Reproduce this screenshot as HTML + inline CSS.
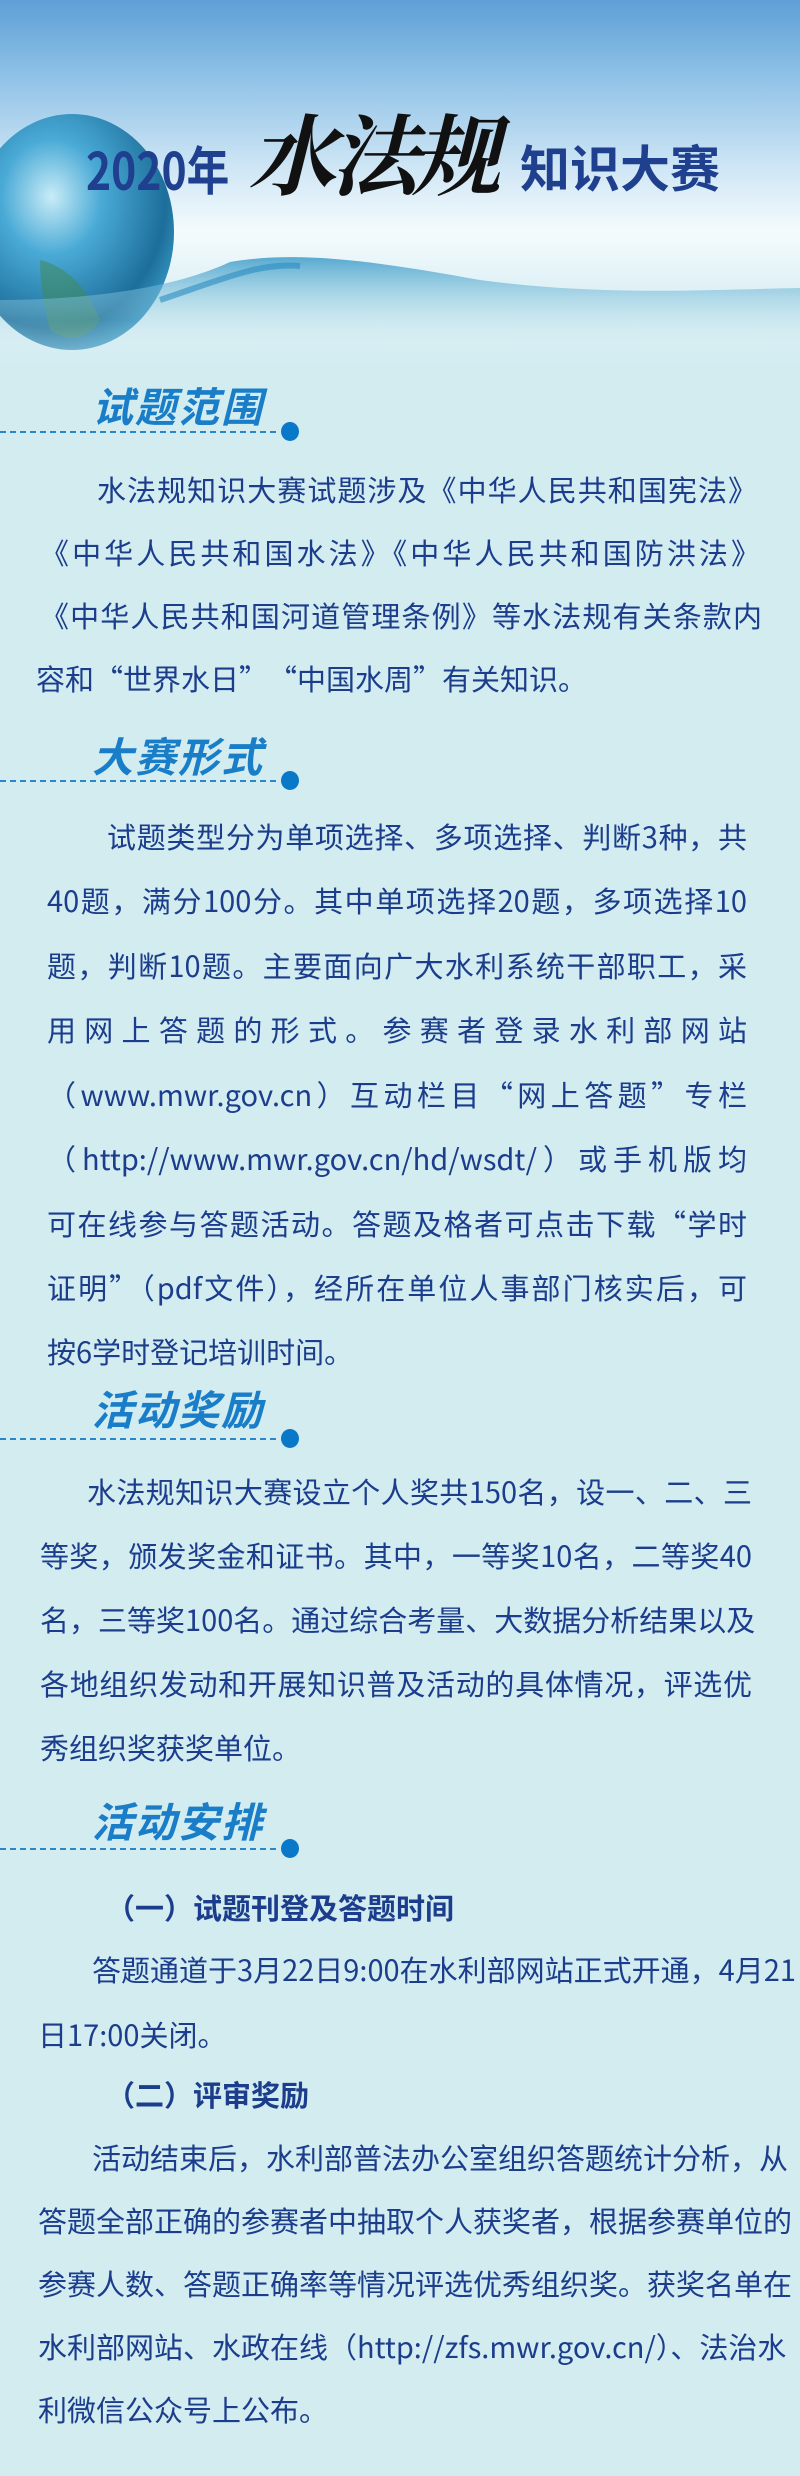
<!DOCTYPE html>
<html><head><meta charset="utf-8"><style>
*{margin:0;padding:0;box-sizing:border-box}
body{width:800px;height:2476px;background:#d2ecf0;position:relative;overflow:hidden;font-family:"Noto Sans CJK SC","Liberation Sans",sans-serif;color:#1b3d8c}
.banner{position:absolute;left:0;top:0;width:800px;height:400px;background:linear-gradient(180deg,#5e9fd6 0%,#8cc0e6 18%,#cfe6f5 42%,#f4fbfd 58%,#dff1f6 72%,#d2ecf0 100%)}
.t{position:absolute;white-space:nowrap}
.ln{position:absolute;font-size:29px;line-height:40px;white-space:nowrap;text-align:justify;text-align-last:justify}
.ll{position:absolute;font-size:29px;line-height:40px;white-space:nowrap}
.h{position:absolute;left:92px;font-size:41px;font-weight:bold;font-style:italic;color:#1a7dc8;letter-spacing:2px;font-family:"WenQuanYi Zen Hei","Noto Sans CJK SC",sans-serif}
.dash{position:absolute;left:0;width:276px;border-top:2px dashed #2a86cc}
.dot{position:absolute;left:281px;width:18px;height:19px;border-radius:50%;background:#0a78c8}
.sub{position:absolute;left:106px;font-size:29px;font-weight:bold;line-height:40px}
</style></head><body>
<div class="banner"></div>
<svg style="position:absolute;left:0;top:0" width="800" height="400">
<defs><radialGradient id="g" cx="0.4" cy="0.35" r="0.7"><stop offset="0" stop-color="#c8ecf7"/><stop offset="0.35" stop-color="#4aaad6"/><stop offset="0.8" stop-color="#1d6e9a"/><stop offset="1" stop-color="#3a9ac6"/></radialGradient>
<linearGradient id="w" x1="0" y1="0" x2="0" y2="1"><stop offset="0" stop-color="#3d9cc9" stop-opacity="0.85"/><stop offset="1" stop-color="#d2ecf0" stop-opacity="0"/></linearGradient>
<linearGradient id="f" x1="0" y1="0" x2="0" y2="1"><stop offset="0" stop-color="#d2ecf0" stop-opacity="0"/><stop offset="1" stop-color="#d2ecf0"/></linearGradient></defs>
<ellipse cx="72" cy="232" rx="102" ry="118" fill="url(#g)"/>
<path d="M40 260 q40 10 60 60 q-20 30 -50 10 q-10 -40 -10 -70 z" fill="#3f8a5a" opacity="0.55"/>
<path d="M0 300 C80 300 170 290 230 262 C300 250 380 262 480 280 C600 296 700 290 800 288 L800 350 C650 340 500 350 350 345 C200 345 100 355 0 350 Z" fill="url(#w)"/>
<path d="M160 300 C220 280 260 262 300 266" stroke="#2a8cc0" stroke-width="6" fill="none" opacity="0.6"/>
<rect x="0" y="320" width="800" height="80" fill="url(#f)"/>
</svg>
<div class="t" style="left:86px;top:130px;font-size:52px;font-weight:bold;color:#1f3f8f;transform:scaleX(0.82);transform-origin:left;font-family:'Noto Sans CJK SC',sans-serif">2020年</div>
<div class="t" style="left:248px;top:88px;font-size:88px;font-weight:bold;font-style:italic;color:#111;font-family:'Noto Serif CJK SC',serif;letter-spacing:-6px">水法规</div>
<div class="t" style="left:520px;top:130px;font-size:50px;font-weight:bold;color:#1f3f8f;font-family:'Noto Sans CJK SC',sans-serif">知识大赛</div>

<div class="h" style="top:374px">试题范围</div><div class="dash" style="top:431px"></div><div class="dot" style="top:422px"></div>
<div class="ln" style="left:97px;width:660px;top:469px">水法规知识大赛试题涉及《中华人民共和国宪法》</div>
<div class="ln" style="left:40px;width:720px;top:532px">《中华人民共和国水法》《中华人民共和国防洪法》</div>
<div class="ln" style="left:40px;width:722px;top:595px">《中华人民共和国河道管理条例》等水法规有关条款内</div>
<div class="ll" style="left:36px;top:658px">容和“世界水日”　“中国水周”有关知识。</div>

<div class="h" style="top:724px">大赛形式</div><div class="dash" style="top:780px"></div><div class="dot" style="top:771px"></div>
<div class="ln" style="left:107px;width:640px;top:816px">试题类型分为单项选择、多项选择、判断3种，共</div>
<div class="ln" style="left:47px;width:700px;top:880px">40题，满分100分。其中单项选择20题，多项选择10</div>
<div class="ln" style="left:47px;width:700px;top:945px">题，判断10题。主要面向广大水利系统干部职工，采</div>
<div class="ln" style="left:47px;width:700px;top:1009px">用网上答题的形式。参赛者登录水利部网站</div>
<div class="ln" style="left:47px;width:700px;top:1074px">（www.mwr.gov.cn）互动栏目“网上答题”专栏</div>
<div class="ln" style="left:47px;width:700px;top:1138px">（http://www.mwr.gov.cn/hd/wsdt/）或手机版均</div>
<div class="ln" style="left:47px;width:700px;top:1203px">可在线参与答题活动。答题及格者可点击下载“学时</div>
<div class="ln" style="left:47px;width:700px;top:1267px">证明”（pdf文件），经所在单位人事部门核实后，可</div>
<div class="ll" style="left:47px;top:1331px">按6学时登记培训时间。</div>

<div class="h" style="top:1377px">活动奖励</div><div class="dash" style="top:1438px"></div><div class="dot" style="top:1429px"></div>
<div class="ln" style="left:87px;width:665px;top:1471px">水法规知识大赛设立个人奖共150名，设一、二、三</div>
<div class="ln" style="left:40px;width:712px;top:1535px">等奖，颁发奖金和证书。其中，一等奖10名，二等奖40</div>
<div class="ln" style="left:40px;width:712px;top:1599px">名，三等奖100名。通过综合考量、大数据分析结果以及</div>
<div class="ln" style="left:40px;width:712px;top:1663px">各地组织发动和开展知识普及活动的具体情况，评选优</div>
<div class="ll" style="left:40px;top:1727px">秀组织奖获奖单位。</div>

<div class="h" style="top:1789px">活动安排</div><div class="dash" style="top:1848px"></div><div class="dot" style="top:1839px"></div>
<div class="sub" style="top:1887px">（一）试题刊登及答题时间</div>
<div class="ln" style="left:92px;width:683px;top:1949px">答题通道于3月22日9:00在水利部网站正式开通，4月21</div>
<div class="ll" style="left:38px;top:2014px">日17:00关闭。</div>
<div class="sub" style="top:2074px">（二）评审奖励</div>
<div class="ln" style="left:92px;width:670px;top:2137px">活动结束后，水利部普法办公室组织答题统计分析，从</div>
<div class="ln" style="left:38px;width:724px;top:2200px">答题全部正确的参赛者中抽取个人获奖者，根据参赛单位的</div>
<div class="ln" style="left:38px;width:724px;top:2263px">参赛人数、答题正确率等情况评选优秀组织奖。获奖名单在</div>
<div class="ln" style="left:38px;width:724px;top:2326px">水利部网站、水政在线（http://zfs.mwr.gov.cn/）、法治水</div>
<div class="ll" style="left:38px;top:2389px">利微信公众号上公布。</div>
</body></html>
